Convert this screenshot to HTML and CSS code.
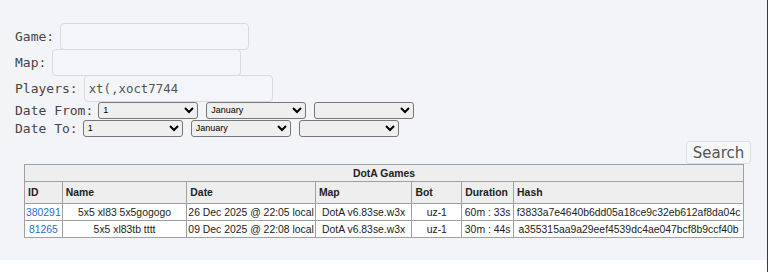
FILE: index.html
```html
<!DOCTYPE html>
<html>
<head>
  <link rel="stylesheet" href="styles.css">
</head>
<body>
  <div id="page">
    <div id="content">
      <form id="search-form">
        <div class="field">
          <label for="game">Game:</label>
          <input type="text" id="game">
        </div>
        <div class="field">
          <label for="map">Map:</label>
          <input type="text" id="map">
        </div>
        <div class="field">
          <label for="players">Players:</label>
          <input type="text" id="players" value="xt(,xoct7744">
        </div>
        <div class="date-row">
          <label>Date From:</label>
          <select><option>1</option></select>
          <select><option>January</option></select>
          <select><option></option></select>
        </div>
        <div class="date-row">
          <label>Date To:</label>
          <select><option>1</option></select>
          <select><option>January</option></select>
          <select><option></option></select>
        </div>
        <div class="actions">
          <button type="button" id="search-button">Search</button>
        </div>
      </form>

      <table id="games">
        <colgroup>
          <col class="c-id"><col class="c-name"><col class="c-date"><col class="c-map">
          <col class="c-bot"><col class="c-dur"><col class="c-hash">
        </colgroup>
        <tr class="title"><th colspan="7">DotA Games</th></tr>
        <tr class="head">
          <th>ID</th><th>Name</th><th>Date</th><th>Map</th><th>Bot</th><th>Duration</th><th>Hash</th>
        </tr>
        <tr>
          <td><a href="#">380291</a></td>
          <td>5x5 xl83 5x5gogogo</td>
          <td>26 Dec 2025 @ 22:05 local</td>
          <td>DotA v6.83se.w3x</td>
          <td>uz-1</td>
          <td>60m : 33s</td>
          <td>f3833a7e4640b6dd05a18ce9c32eb612af8da04c</td>
        </tr>
        <tr>
          <td><a href="#">81265</a></td>
          <td>5x5 xl83tb tttt</td>
          <td>09 Dec 2025 @ 22:08 local</td>
          <td>DotA v6.83se.w3x</td>
          <td>uz-1</td>
          <td>30m : 44s</td>
          <td>a355315aa9a29eef4539dc4ae047bcf8b9ccf40b</td>
        </tr>
      </table>
    </div>
  </div>
</body>
</html>
```

FILE: styles.css
```css
body {
  margin: 0;
  padding: 0;
  background-color: white;
}

#page {
  width: 767px;
  min-height: 272px;
  border-right: 1px solid #3a3a3a;
}

#content {
  background-color: #f3f4f8;
  height: 260px;
  padding: 23px 16px 0 15px;
  box-sizing: border-box;
}

#search-form label {
  font-family: "DejaVu Sans Mono", monospace;
  font-size: 13px;
  color: #444;
}

.field {
  display: flex;
  align-items: center;
  gap: 6px;
  height: 26px;
}

.field input {
  width: 189px;
  height: 27px;
  box-sizing: border-box;
  border: 1px solid #d8dadf;
  border-radius: 4px;
  background-color: #f4f5f8;
  padding: 0 4px;
  font-family: "DejaVu Sans Mono", monospace;
  font-size: 12.4px;
  color: #555;
  outline: none;
}

.date-row {
  display: flex;
  align-items: center;
  gap: 8px;
  height: 18px;
}

.date-row label {
  margin-right: -3px;
}

.date-row select {
  width: 100px;
  height: 17px;
  font-family: "Liberation Sans", Arial, sans-serif;
  font-size: 9px;
  padding: 0;
  border-radius: 3px;
}

.actions {
  text-align: right;
  height: 23px;
  padding-top: 4px;
}

#search-button {
  width: 65px;
  height: 23px;
  border: 1px solid #dcdde1;
  border-radius: 3px;
  background-color: #f6f7f9;
  font-family: "DejaVu Sans", sans-serif;
  font-size: 15px;
  color: #555;
  padding: 0;
}

#games {
  width: 720px;
  margin: 0 0 0 9px;
  border-collapse: collapse;
  font-family: "Liberation Sans", Arial, sans-serif;
  font-size: 10.4px;
  color: #222;
}

.c-id { width: 37px; }
.c-name { width: 126px; }
.c-date { width: 127px; }
.c-map { width: 97px; }
.c-bot { width: 51px; }
.c-dur { width: 52px; }
.c-hash { width: 230px; }

#games th,
#games td {
  border: 1px solid #a0a0a0;
  white-space: nowrap;
}

#games th {
  background-color: #eeeeee;
  text-align: left;
  padding: 0 3px;
  height: 21px;
}

#games .title th {
  text-align: center;
  height: 16px;
}

#games td {
  background-color: white;
  text-align: center;
  padding: 0 1px;
  height: 16px;
}

#games a {
  color: #1f6fd1;
  text-decoration: none;
}
```
